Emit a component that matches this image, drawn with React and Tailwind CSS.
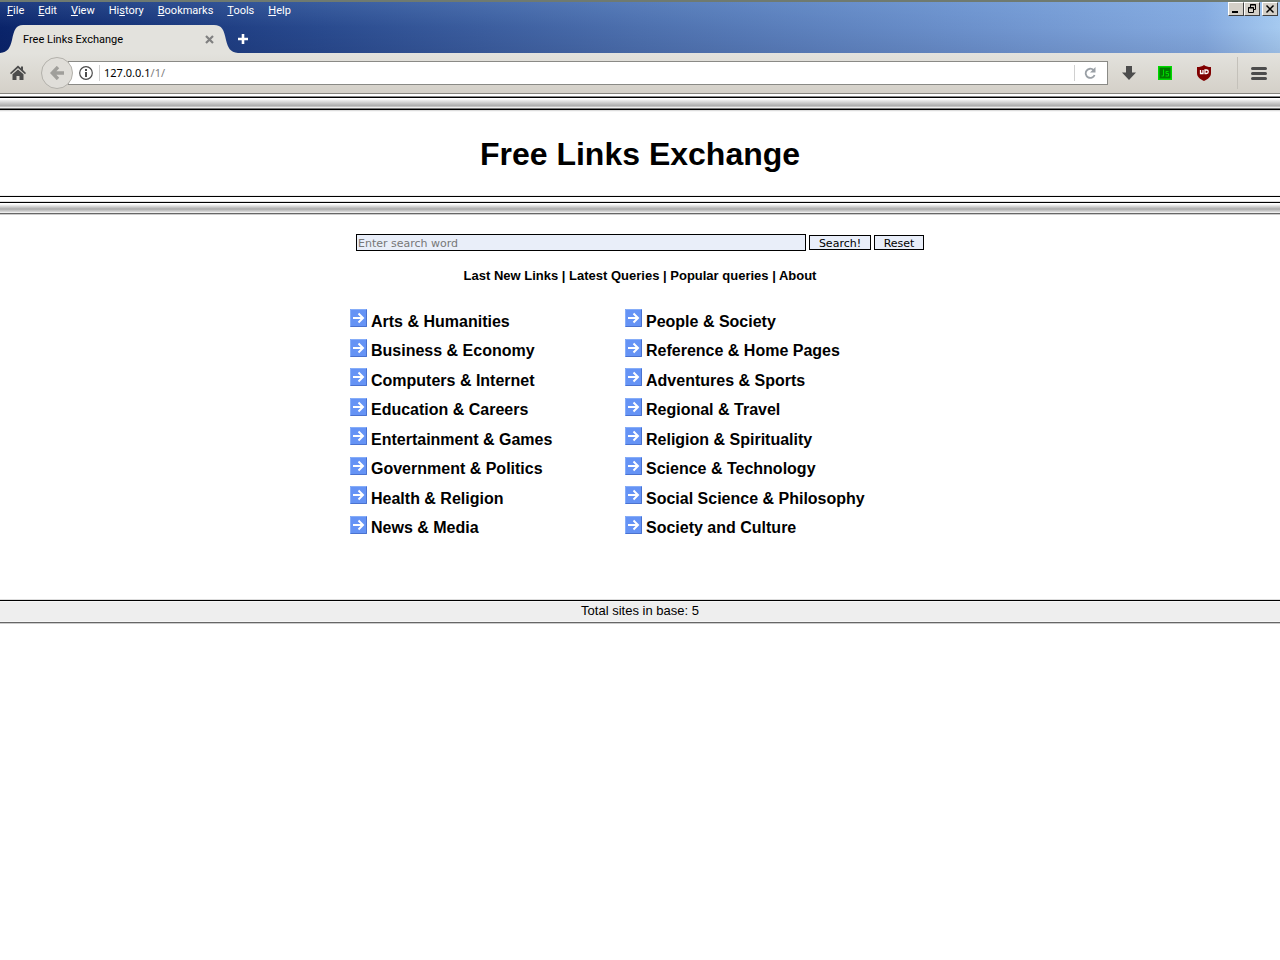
const menus = [
  ['', 'F', 'ile'],
  ['', 'E', 'dit'],
  ['', 'V', 'iew'],
  ['Hi', 's', 'tory'],
  ['', 'B', 'ookmarks'],
  ['', 'T', 'ools'],
  ['', 'H', 'elp'],
];

const navLinks = ['Last New Links', 'Latest Queries', 'Popular queries', 'About'];

const categories = [
  'Arts & Humanities',
  'Business & Economy',
  'Computers & Internet',
  'Education & Careers',
  'Entertainment & Games',
  'Government & Politics',
  'Health & Religion',
  'News & Media',
  'People & Society',
  'Reference & Home Pages',
  'Adventures & Sports',
  'Regional & Travel',
  'Religion & Spirituality',
  'Science & Technology',
  'Social Science & Philosophy',
  'Society and Culture',
];

function WindowButton({ label, children }) {
  return (
    <button
      aria-label={label}
      className="w-4 h-[14px] bg-[#d4d0c8] border border-t-white border-l-white border-r-[#404040] border-b-[#404040]"
    >
      <svg className="w-[14px] h-3" viewBox="0 0 14 12" fill="none" stroke="black">
        {children}
      </svg>
    </button>
  );
}

function TitleBar() {
  return (
    <div className="border-t-2 border-[#6f7a70] font-[Roboto,Tahoma,sans-serif] bg-[linear-gradient(180deg,rgba(150,200,255,0.15),rgba(255,255,255,0)_50%,rgba(0,0,40,0.08)),linear-gradient(90deg,#0a246a,#294a8e_25%,#4d70ae_50%,#6b90cb_75%,#84a9de_94%,#a6caf0)]">
      <div className="flex justify-between h-[23px]">
        <nav className="flex gap-[14px] pl-[7px] text-[11px] leading-[18px] text-white">
          {menus.map(([before, key, after]) => (
            <button key={key + after} className="h-[18px]">
              {before}
              <span className="underline">{key}</span>
              {after}
            </button>
          ))}
        </nav>
        <div className="flex pr-[2px]">
          <WindowButton label="Minimize">
            <path d="M3 9h6" strokeWidth="2" />
          </WindowButton>
          <WindowButton label="Restore">
            <path d="M5.500 4V1.500h5v5H9M5 2h6M3.500 4.500h5v5h-5zM3 5h6" />
          </WindowButton>
          <div className="w-[2px]" />
          <WindowButton label="Close">
            <path d="M3.500 2.500l7 7M10.500 2.500l-7 7" strokeWidth="1.500" />
          </WindowButton>
        </div>
      </div>
      <div className="flex h-7">
        <svg className="w-[23px] h-7" viewBox="0 0 23 28" fill="#e3e2dd">
          <path d="M0 28C8 27 10 23 12 15C14 5 16 0 23 0V28z" />
        </svg>
        <div className="flex items-center justify-between w-[191px] bg-[#e3e2dd] text-[11px]">
          <span className="pt-[2px]">Free Links Exchange</span>
          <button aria-label="Close tab">
            <svg className="w-[9px] h-[9px]" viewBox="0 0 9 9" stroke="#808080" strokeWidth="2.200">
              <path d="M1 1l7 7M8 1l-7 7" />
            </svg>
          </button>
        </div>
        <svg className="w-6 h-7" viewBox="0 0 24 28" fill="#e3e2dd">
          <path d="M24 28C16 27 14 23 12 15C10 5 8 0 0 0V28z" />
        </svg>
        <button aria-label="New tab" className="-ml-px">
          <svg className="w-3 h-3" viewBox="0 0 12 12" stroke="white" strokeWidth="2.600">
            <path d="M6 1v10M1 6h10" />
          </svg>
        </button>
      </div>
    </div>
  );
}

function ToolBar() {
  return (
    <div className="flex items-center h-[41px] border-b border-[#86847f] bg-linear-to-b from-[#e3e2dd] to-[#d4d0c8] font-['Noto_Sans',Tahoma,sans-serif]">
      <button aria-label="Home" className="ml-[10px] mr-[15px]">
        <svg className="w-4 h-4" viewBox="0 0 16 16" fill="#4c4c4c">
          <path d="M8 .5l3 2.700V1.500h2V5l3 3-1 1.200L8 3 1 9.200 0 8z" />
          <path d="M8 4.500l5.500 4.800V15h-4v-4h-3v4h-4V9.300z" />
        </svg>
      </button>
      <button
        aria-label="Back"
        className="z-10 flex items-center justify-center w-8 h-8 rounded-full border border-[#b3b1ab] bg-[#e0ded9]"
      >
        <svg className="w-[14px] h-[14px]" viewBox="0 0 14 14" fill="none" stroke="#a09f9b" strokeWidth="3.400">
          <path d="M14 7H2.500M8 1L2.300 7L8 13" />
        </svg>
      </button>
      <div className="flex items-center flex-1 h-6 -ml-[5px] pl-[10px] border border-[#8a8a86] bg-white">
        <svg className="w-[14px] h-[14px]" viewBox="0 0 14 14" fill="none" stroke="#4c4c4c">
          <circle cx="7" cy="7" r="6.300" strokeWidth="1.200" />
          <path d="M7 6v5M7 3v2" strokeWidth="2" />
        </svg>
        <div className="w-px h-4 ml-[6px] mr-1 bg-[#d0d0d0]" />
        <label className="relative flex-1 text-[11px] leading-4">
          <input
            aria-label="Address"
            defaultValue="127.0.0.1/1/"
            className="block w-full outline-none text-transparent"
          />
          <span className="absolute inset-0 pointer-events-none">
            127.0.0.1<span className="text-[#808080]">/1/</span>
          </span>
        </label>
        <button aria-label="Reload" className="h-4 pl-[9px] pr-[11px] border-l border-[#d0d0d0]">
          <svg className="w-3 h-3" viewBox="0 0 12 12" fill="none" stroke="#9aa0a6">
            <path d="M9.500 3A4.600 4.600 0 1 0 10.600 8" strokeWidth="1.800" />
            <path d="M11.500 0v5.500H6z" fill="#9aa0a6" stroke="none" />
          </svg>
        </button>
      </div>
      <button aria-label="Downloads" className="ml-[14px]">
        <svg className="w-[14px] h-[14px]" viewBox="0 0 14 14" fill="#4c4c4c">
          <path d="M4 0h6v6.500H14L7 14 0 6.500h4z" />
        </svg>
      </button>
      <button aria-label="JavaScript switch" className="ml-[22px]">
        <svg className="w-[14px] h-[14px]" viewBox="0 0 14 14" fill="#007a00">
          <path d="M.75.75h12.500v12.500H.75z" stroke="#00d800" strokeWidth="1.500" />
          <path d="M5.500 3.500v6.500H3.500M10.500 5.500h-2.500v2h2.500V10H7.500" fill="none" stroke="#00d800" />
        </svg>
      </button>
      <button aria-label="uBlock" className="ml-[25px]">
        <svg className="w-[14px] h-4" viewBox="0 0 14 16" fill="#800000">
          <path d="M7 0c2 1.500 4 2 7 2v6c0 4-3 6-7 8-4-2-7-4-7-8V2c3 0 5-.5 7-2z" />
          <path d="M3.500 5v3.500h2.500V5M8 5v3.500h1.500a1.700 1.700 0 0 0 0-3.500z" fill="none" stroke="white" strokeWidth="1.300" />
        </svg>
      </button>
      <div className="w-px h-8 ml-[26px] mr-[13px] bg-[#c4c1ba]" />
      <button aria-label="Menu" className="mr-[13px]">
        <svg className="w-4 h-[13px]" viewBox="0 0 16 13" stroke="#4c4c4c" strokeWidth="3" strokeLinecap="round">
          <path d="M1.500 1.500h13M1.500 6.500h13M1.500 11.500h13" />
        </svg>
      </button>
    </div>
  );
}

function CategoryLink({ name }) {
  return (
    <li className="flex items-center gap-1">
      <svg className="w-[17px] h-[18px] mb-[7px]" viewBox="0 0 17 18" fill="none">
        <path d="M0 0h17v18H0z" fill="#6593f5" />
        <path d="M.5 17V.5H16" stroke="#86adf8" />
        <path d="M16.500 1v16.500H1" stroke="#4a72cf" />
        <path d="M3 9h10M8.500 4.500L13 9l-4.500 4.500" stroke="white" strokeWidth="2" />
      </svg>
      <a href="#" className="leading-5">
        {name}
      </a>
    </li>
  );
}

export default function App() {
  return (
    <div className="min-h-screen bg-white text-black font-['Liberation_Sans',Arial,sans-serif]">
      <TitleBar />
      <ToolBar />

      <div className="h-[18px] bg-[linear-gradient(180deg,#fff_0_2px,#888_2px_3px,#000_3px_4px,#fff_4px_5px,#eee_6px,#aaa_12px,#ddd_13px,#fff_14px,#777_14px_15px,#000_15px_16px,#ddd_16px_17px,#f6f6f6_17px)]" />
      <header className="flex items-center justify-center h-[83px]">
        <h1 className="text-[32px] leading-9 font-bold">Free Links Exchange</h1>
      </header>
      <div className="h-[21px] bg-[linear-gradient(180deg,#eee_0_1px,#000_1px_2px,#fff_2px_6px,#ddd_6px_7px,#000_7px_8px,#fff_8px_9px,#eee_10px,#aaa_14px,#ddd_17px,#fff_18px,#666_18px_19px,#ccc_19px_20px,#fff_20px)]" />

      <main className="flex flex-col items-center pt-[18px]">
        <form
          className="flex items-center gap-[3px] font-['DejaVu_Sans',Verdana,sans-serif] text-[11px]"
          onSubmit={e => e.preventDefault()}
        >
          <input
            aria-label="Search word"
            placeholder="Enter search word"
            className="w-[450px] h-[17px] px-px pt-px border border-black bg-[#e9eef9] placeholder:text-[#777]"
          />
          <button type="submit" className="w-[62px] h-[15px] leading-[15px] border border-black bg-[#e9eef9]">
            Search!
          </button>
          <button type="reset" className="w-[50px] h-[15px] leading-[15px] border border-black bg-[#e9eef9]">
            Reset
          </button>
        </form>

        <nav className="mt-[17px] text-[13px] leading-4 font-bold">
          {navLinks.map((link, index) => (
            <span key={link}>
              {index > 0 && ' | '}
              <a href="#">{link}</a>
            </span>
          ))}
        </nav>

        <ul className="grid grid-cols-[275px_305px] grid-rows-8 grid-flow-col h-[236px] mt-[23px] text-[16px] font-bold">
          {categories.map(name => (
            <CategoryLink key={name} name={name} />
          ))}
        </ul>
      </main>

      <footer className="mt-14 h-[25px] text-center text-[13px] leading-6 bg-[linear-gradient(180deg,#ddd_0_1px,#000_1px_2px,#f6f6f6_2px_3px,#eee_3px_22px,#f6f6f6_22px_23px,#666_23px_24px,#ccc_24px)]">
        Total sites in base: 5
      </footer>
    </div>
  );
}
